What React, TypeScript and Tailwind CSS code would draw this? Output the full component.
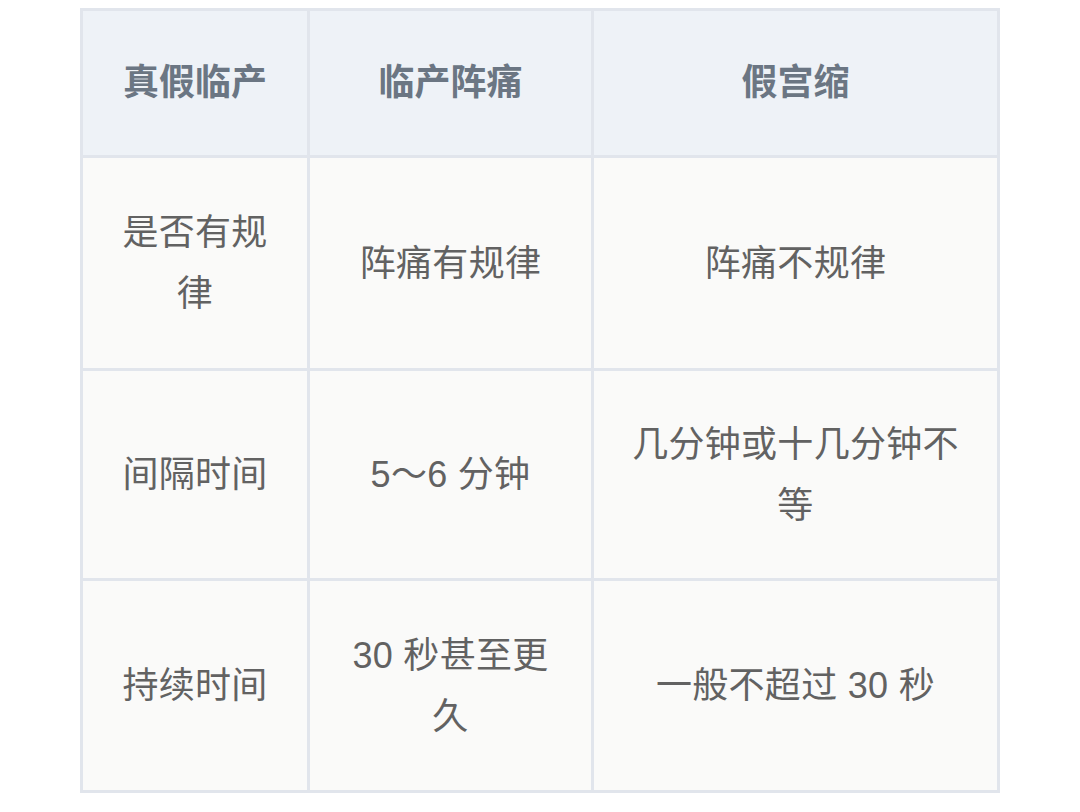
import React from 'react';

const rows: { h: string; cells: string[] }[] = [
  { h: 'h-[213px]', cells: ['是否有规律', '阵痛有规律', '阵痛不规律'] },
  { h: 'h-[210px]', cells: ['间隔时间', '5～6 分钟', '几分钟或十几分钟不等'] },
  { h: 'h-[212px]', cells: ['持续时间', '30 秒甚至更久', '一般不超过 30 秒'] },
];

const widths = ['w-[227px]', 'w-[284px]', 'w-[406px]'];

export default function App() {
  return (
    <div className="w-[1080px] h-[812px] bg-white pt-[8px] pl-[80px] font-['Liberation_Sans','Noto_Sans_CJK_SC',sans-serif]">
      <div className="inline-flex flex-col border-l-[3px] border-t-[3px] border-[#e1e5ec]">
        <div className="flex h-[147px] bg-[#eef2f7]">
          {['真假临产', '临产阵痛', '假宫缩'].map((t, i) => (
            <div
              key={t}
              className={`${widths[i]} flex items-center justify-center px-[30px] border-r-[3px] border-b-[3px] border-[#e1e5ec] text-[36px] font-bold text-[#6b7683] text-center leading-[60px]`}
            >
              {t}
            </div>
          ))}
        </div>
        {rows.map((r) => (
          <div key={r.cells[0]} className={`flex ${r.h} bg-[#fafaf9]`}>
            {r.cells.map((t, i) => (
              <div
                key={i}
                className={`${widths[i]} flex items-center justify-center px-[30px] border-r-[3px] border-b-[3px] border-[#e1e5ec] text-[36px] text-[#626262] text-center leading-[61px] tracking-[0.3px]`}
              >
                {t}
              </div>
            ))}
          </div>
        ))}
      </div>
    </div>
  );
}
